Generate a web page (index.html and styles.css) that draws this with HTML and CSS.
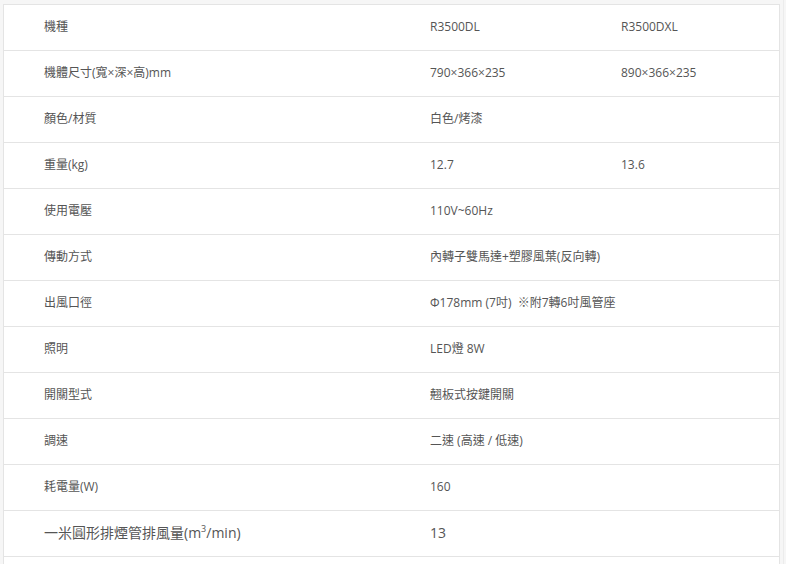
FILE: index.html
```html
<!DOCTYPE html>
<html lang="zh-Hant">
<head>
<meta charset="utf-8">
<link rel="stylesheet" href="styles.css">
</head>
<body>
<div class="page">
  <div class="sheet">
    <table class="spec">
      <tbody>
        <tr><td class="lbl">機種</td><td>R3500DL</td><td>R3500DXL</td></tr>
        <tr><td class="lbl">機體尺寸(寬×深×高)mm</td><td>790×366×235</td><td>890×366×235</td></tr>
        <tr><td class="lbl">顏色/材質</td><td>白色/烤漆</td><td></td></tr>
        <tr><td class="lbl">重量(kg)</td><td>12.7</td><td>13.6</td></tr>
        <tr><td class="lbl">使用電壓</td><td>110V~60Hz</td><td></td></tr>
        <tr><td class="lbl">傳動方式</td><td colspan="2">內轉子雙馬達+塑膠風葉(反向轉)</td></tr>
        <tr><td class="lbl">出風口徑</td><td colspan="2">Φ178mm (7吋)&nbsp;&nbsp;※附7轉6吋風管座</td></tr>
        <tr><td class="lbl">照明</td><td>LED燈 8W</td><td></td></tr>
        <tr><td class="lbl">開關型式</td><td>翹板式按鍵開關</td><td></td></tr>
        <tr><td class="lbl">調速</td><td>二速 (高速 / 低速)</td><td></td></tr>
        <tr><td class="lbl">耗電量(W)</td><td>160</td><td></td></tr>
        <tr class="big"><td class="lbl">一米圓形排煙管排風量(m<sup>3</sup>/min)</td><td>13</td><td></td></tr>
      </tbody>
    </table>
  </div>
  <div class="edge"></div>
</div>
</body>
</html>
```
FILE: styles.css
```css
html, body {
  margin: 0;
  padding: 0;
  background: #f6f6f6;
  height: 100%;
  overflow: hidden;
}
body {
  font-family: "Open Sans", "Noto Sans CJK TC", sans-serif;
  color: #555;
}
.page {
  display: flex;
  align-items: stretch;
  height: 100%;
  padding: 4px 0 0 3px;
  box-sizing: border-box;
}
.sheet {
  width: 775px;
  background: #fff;
  border: 1px solid #e4e4e4;
  border-bottom: 0;
}
.spec {
  width: 100%;
  border-collapse: collapse;
  table-layout: fixed;
}
.spec td {
  height: 46px;
  padding: 0 0 0 40px;
  border-bottom: 1px solid #e4e4e4;
  font-size: 12px;
  line-height: 16px;
  vertical-align: middle;
  box-sizing: border-box;
  white-space: nowrap;
}
.spec tr:first-child td { height: 45px; }
.spec td:nth-child(1) { width: 386px; }
.spec td:nth-child(2) { width: 191px; }
.spec .big td { font-size: 14px; }
.spec sup {
  font-size: 9px;
  line-height: 0;
}
.edge {
  width: 1px;
  margin-left: 3px;
  margin-top: -4px;
  background: #ececec;
}
```
